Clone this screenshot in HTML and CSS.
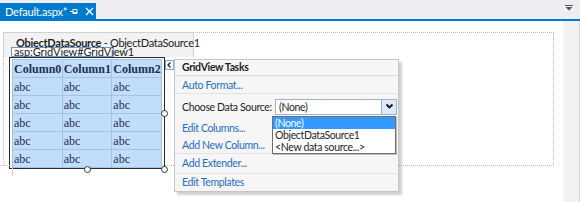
FILE: index.html
```html
<!DOCTYPE html>
<html>
<head>
<meta charset="utf-8">
<link rel="stylesheet" href="styles.css">
</head>
<body>
<div class="tabbar">
  <div class="tab">
    <span class="tab-title">Default.aspx*</span>
    <svg class="pin" width="8" height="7" viewBox="0 0 8 7"><path d="M0 3.5H3M3 1V6M3 1.5H7V5.5H3M3 4.5H7" stroke="#fff" stroke-width="1" fill="none"/></svg>
    <svg class="close" width="9" height="9" viewBox="0 0 9 9"><path d="M1 1L8 8M8 1L1 8" stroke="#fff" stroke-width="1.4"/></svg>
  </div>
  <div class="tab-spacer"></div>
  <svg class="tab-menu" width="8" height="6" viewBox="0 0 8 6"><path d="M0 0.5H8" stroke="#555" stroke-width="1"/><path d="M0.5 2H7.5L4 5.5Z" fill="#555"/></svg>
</div>
<div class="tabline"></div>
<div class="editor">
  <div class="canvas">
    <div class="form">
      <div class="ods"><b>ObjectDataSource</b> - ObjectDataSource1</div>
      <div class="gridwrap">
        <table class="grid">
          <tr><th>Column0</th><th>Column1</th><th>Column2</th></tr>
          <tr><td>abc</td><td>abc</td><td>abc</td></tr>
          <tr><td>abc</td><td>abc</td><td>abc</td></tr>
          <tr><td>abc</td><td>abc</td><td>abc</td></tr>
          <tr><td>abc</td><td>abc</td><td>abc</td></tr>
          <tr><td>abc</td><td>abc</td><td>abc</td></tr>
        </table>
        <span class="handle h-right"></span>
        <span class="handle h-bottom"></span>
        <span class="handle h-corner"></span>
      </div>
    </div>
    <span class="crossh"></span>
    <span class="crossv"></span>
    <div class="ctl-label">asp:GridView#GridView1</div>
    <div class="smarttag"><svg width="7" height="8" viewBox="0 0 7 8"><path d="M4.5 1.5L2 4L4.5 6.5" stroke="#222" stroke-width="1.3" fill="none"/></svg></div>
    <div class="tasks">
      <div class="t-title">GridView Tasks</div>
      <div class="t-group g1"><a class="t-link">Auto Format...</a></div>
      <div class="t-group g2">
        <div class="t-choose">
          <span>Choose Data Source:</span>
          <div class="select">
            <span class="sel-val">(None)</span>
            <span class="sel-btn"><svg width="9" height="7" viewBox="0 0 9 7"><path d="M1.5 1.5L4.5 4.5L7.5 1.5" stroke="#111" stroke-width="1.8" fill="none"/></svg></span>
          </div>
        </div>
        <div class="t-row"><a class="t-link">Edit Columns...</a></div>
        <div class="t-row last"><a class="t-link">Add New Column...</a></div>
      </div>
      <div class="t-group g3"><a class="t-link">Add Extender...</a></div>
      <div class="t-group g4"><a class="t-link">Edit Templates</a></div>
    </div>
    <ul class="dd-list">
      <li class="sel">(None)</li>
      <li>ObjectDataSource1</li>
      <li>&lt;New data source...&gt;</li>
    </ul>
  </div>
  <div class="vscroll"></div>
</div>
</body>
</html>
```
FILE: styles.css
```css
* { box-sizing: border-box; }
html, body { margin: 0; padding: 0; }
body {
  width: 580px;
  height: 202px;
  overflow: hidden;
  background: #eeeef2;
  font-family: Lato, "Open Sans", sans-serif;
  font-size: 10.5px;
  letter-spacing: -0.35px;
  color: #1e1e1e;
  white-space: nowrap;
}
.tabbar {
  height: 19px;
  display: flex;
  align-items: flex-end;
}
.tab {
  width: 96px;
  height: 16px;
  background: #007acc;
  color: #fff;
  display: flex;
  align-items: center;
  padding-left: 5px;
  font-size: 11px;
  letter-spacing: -0.2px;
}
.tab-title { width: 64px; }
.pin { margin-left: 1px; }
.close { margin-left: 7px; }
.tab-spacer { flex: 1; }
.tab-menu { margin: 0 7px 8px 0; }
.tabline { height: 2px; background: #007acc; }
.editor {
  display: flex;
  height: 181px;
}
.canvas {
  position: relative;
  flex: 1;
  background: #fff;
  padding: 11px 0 0 3px;
}
.vscroll {
  width: 17px;
  background: #f2f2f2;
  border-right: 1px solid #d6d6d6;
}
.form {
  width: 551px;
  height: 134px;
  border: 1px dotted #b8b8b8;
}
.ods {
  margin: -1px 0 0 -1px;
  width: 191px;
  height: 25px;
  background: #f2f2f2;
  border: 1px solid #d0d0d0;
  border-bottom: none;
  padding: 3px 0 0 12px;
  line-height: 14px;
  font-size: 11px;
  letter-spacing: -0.3px;
}
.ods b { font-weight: 700; }
.gridwrap {
  position: relative;
  margin-left: 5px;
  width: 156px;
  height: 112px;
  border: 1px solid #2a2a2a;
  padding: 1px 1px 2px 2px;
}
.grid {
  border-collapse: collapse;
  width: 150px;
  background: #c2ddfa;
  font-family: "Liberation Serif", "Times New Roman", serif;
  font-size: 12px;
  letter-spacing: 0;
  color: #1d2f57;
}
.grid th, .grid td {
  width: 50px;
  height: 18px;
  padding: 0 0 0 1px;
  border: 1px solid #a3c3e6;
  text-align: left;
  line-height: 16px;
}
.grid th { font-weight: 700; }
.handle {
  position: absolute;
  width: 7px;
  height: 7px;
  border: 1px solid #333;
  border-radius: 50%;
  background: #fff;
}
.h-right { left: 151px; top: 52px; }
.h-bottom { left: 74px; top: 108px; }
.h-corner { left: 151px; top: 108px; }
.crossh {
  position: absolute;
  left: 0; top: 144px;
  width: 12px; height: 1px;
  background: #f0c8c8;
}
.crossv {
  position: absolute;
  left: 12px; top: 147px;
  width: 1px; height: 8px;
  background: #f0c8c8;
}
.ctl-label {
  position: absolute;
  left: 11px;
  top: 26px;
  width: 103px;
  height: 10px;
  border: 1px solid #6f99d4;
  background: #fff;
  font-size: 11px;
  letter-spacing: -0.1px;
  line-height: 8px;
  padding-left: 2px;
  color: #222;
}
.smarttag {
  position: absolute;
  left: 165px;
  top: 39px;
  width: 9px;
  height: 10px;
  border: 1px solid #8aa8d0;
  background: #fff;
  display: flex;
  align-items: center;
  justify-content: center;
}
.tasks {
  position: absolute;
  left: 174px;
  top: 38px;
  width: 225px;
  height: 133px;
  background: #f6f6f6;
  border: 1px solid #c6c6c6;
  box-shadow: 3px 3px 2px rgba(0,0,0,0.18);
  padding: 0 1px 0 7px;
}
.t-title {
  height: 16px;
  line-height: 15px;
  font-weight: 700;
  border-bottom: 1px solid #dcdcdc;
  margin-left: -7px;
  padding-left: 7px;
}
.t-group {
  margin-left: -7px;
  padding-left: 7px;
  border-bottom: 1px solid #e2e2e2;
}
.g1 { height: 18px; line-height: 18px; }
.g2 { height: 60px; }
.g3 { height: 20px; line-height: 19px; }
.g4 { border-bottom: none; height: 17px; line-height: 17px; }
.t-link { color: #1f6dc2; }
.t-choose {
  height: 25px;
  display: flex;
  align-items: center;
  justify-content: space-between;
}
.t-row { height: 18px; line-height: 18px; }
.t-row.last { height: 16px; line-height: 16px; }
.select {
  width: 122px;
  height: 16px;
  border: 1px solid #9fb4cc;
  background: #fff;
  display: flex;
  align-items: center;
}
.sel-val { flex: 1; padding-left: 3px; line-height: 14px; }
.sel-btn {
  width: 15px;
  height: 14px;
  background: #dceafb;
  border-left: 1px solid #7eb4ea;
  display: flex;
  align-items: center;
  justify-content: center;
}
.dd-list {
  position: absolute;
  left: 272px;
  top: 95px;
  width: 124px;
  height: 38px;
  margin: 0;
  padding: 0;
  list-style: none;
  background: #fff;
  border: 1px solid #6e6e6e;
  box-shadow: 1px 1px 0 #bdbdbd;
}
.dd-list li {
  height: 12px;
  line-height: 12px;
  padding-left: 2px;
}
.dd-list li.sel { background: #3399ff; color: #fff; }
```
